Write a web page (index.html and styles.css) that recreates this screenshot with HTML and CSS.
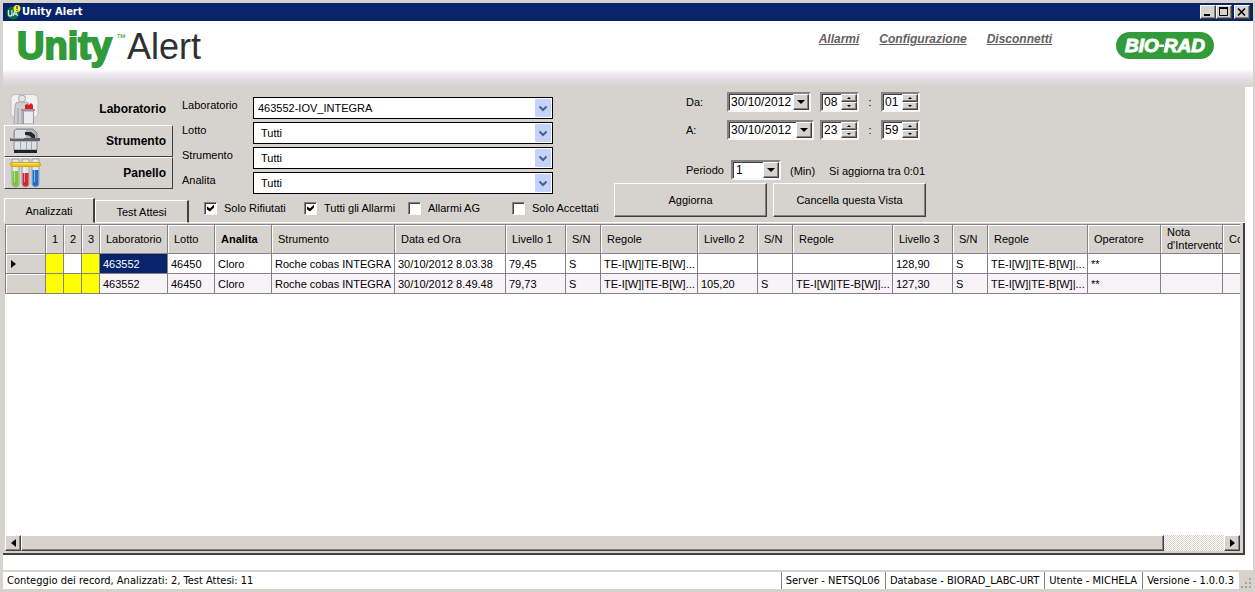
FILE: index.html
```html
<!DOCTYPE html>
<html lang="it">
<head>
<meta charset="utf-8">
<title>Unity Alert</title>
<link rel="stylesheet" href="styles.css">
</head>
<body>
<div class="window">
  <div class="titlebar">
    <svg class="app-icon" width="15" height="15" viewBox="0 0 15 15" aria-hidden="true">
      <circle cx="7" cy="8" r="6.5" fill="#0b6b43"/>
      <path d="M2.5 5v4q0 2 1.7 2t1.7-2V5M7 11l2-6 2.500 6M7.500 9h3" fill="none" stroke="#cfe8dc" stroke-width="1.300"/>
      <circle cx="11" cy="3.500" r="3.500" fill="#f4ee2e"/>
      <path d="M11 1v3M11 5v1" stroke="#333" stroke-width="1.200"/>
    </svg>
    <span class="title">Unity Alert</span>
    <div class="window-buttons">
      <button type="button" class="raised wbtn" aria-label="Riduci"><svg width="12" height="10" viewBox="0 0 12 10"><path d="M2 8h6" stroke="#000" stroke-width="2"/></svg></button>
      <button type="button" class="raised wbtn" aria-label="Ingrandisci"><svg width="12" height="10" viewBox="0 0 12 10"><path d="M1.500 1v7.500h8V1" fill="none" stroke="#000"/><path d="M1 1h9" stroke="#000" stroke-width="2"/></svg></button>
      <button type="button" class="raised wbtn wclose" aria-label="Chiudi"><svg width="12" height="10" viewBox="0 0 12 10"><path d="M2 1.500l7 7M9 1.500l-7 7" stroke="#000" stroke-width="1.600"/></svg></button>
    </div>
  </div>

  <header class="banner">
    <h1 class="brand"><span class="brand-unity">Unity</span><sup class="brand-tm">™</sup><span class="brand-alert">Alert</span></h1>
    <nav class="links">
      <a href="#allarmi">Allarmi</a>
      <a href="#configurazione">Configurazione</a>
      <a href="#disconnetti">Disconnetti</a>
    </nav>
    <div class="biorad">BIO<svg width="5" height="4" viewBox="0 0 5 4" aria-hidden="true"><path d="M0.500 0.500h5v2.500h-5.500z" fill="#fff"/></svg>RAD</div>
  </header>

  <main class="content">
    <section class="controls">
      <div class="left">
        <div class="filters">
          <div class="side-nav">
            <button type="button" class="side selected">
              <svg width="30" height="30" viewBox="0 0 30 30" aria-hidden="true">
                <rect x="1" y="0.500" width="27" height="23" rx="4" fill="#f1eff1" stroke="#c2bfc2"/>
                <path d="M4 30l1-18q0-4 4-4h6q4 0 4 3v19z" fill="#cfcfd1" stroke="#a8a8aa"/>
                <path d="M8 14v16M12 16v14" stroke="#99999b"/>
                <circle cx="12" cy="4.500" r="3.500" fill="#e4e3e5" stroke="#aaa"/>
                <path d="M13.500 17h10v13h-10z" fill="#ececee" stroke="#9b9b9d"/>
                <path d="M11 16h14" stroke="#99999b" stroke-width="2"/>
                <path d="M15 11l2-1 2 1 2-2 2 2v4h-8z" fill="#e01c1f"/>
              </svg>
              <span>Laboratorio</span>
            </button>
            <button type="button" class="side">
              <svg width="30" height="28" viewBox="0 0 30 28" aria-hidden="true">
                <path d="M4 13V4l2-2h17l4 4v7z" fill="#b4b5ba" stroke="#85878d"/>
                <path d="M5 3h11v8H5z" fill="#dcdde0"/>
                <path d="M15 5h6l4 3v4h-3q-1-4-7-4z" fill="#26282d"/>
                <path d="M4 14h23v9H4z" fill="#dfe0e3" stroke="#8b8d92"/>
                <path d="M10.500 15v8M16.500 15v8M21.500 15v8" stroke="#a2a4a9"/>
                <path d="M0 12.500h30" stroke="#5d6067" stroke-width="3"/>
                <path d="M1 11.500h13" stroke="#a7a9af"/>
                <path d="M4 24.500h23" stroke="#202226" stroke-width="3"/>
              </svg>
              <span>Strumento</span>
            </button>
            <button type="button" class="side">
              <svg width="31" height="30" viewBox="0 0 31 30" aria-hidden="true">
                <path d="M2 1h7v24q0 4-3.500 4t-3.500-4zM12 1h7v24q0 4-3.500 4t-3.500-4zM22 1h7v24q0 4-3.500 4t-3.500-4z" fill="#e3e4e8" stroke="#9ea0a8"/>
                <path d="M2.500 13h6v12q0 3.500-3 3.500t-3-3.500z" fill="#78c833"/>
                <path d="M12.500 15h6v10q0 3.500-3 3.500t-3-3.500z" fill="#cf2931"/>
                <path d="M22.500 12h6v13q0 3.500-3 3.500t-3-3.500z" fill="#1d6fce"/>
                <path d="M4.500 9v15M14.500 9v15M24.500 9v15" stroke="#fff" opacity=".5"/>
                <rect x="0.500" y="4.500" width="30" height="4" rx="2" fill="#ecc91c" stroke="#cba60f"/>
                <path d="M3 5.500h25" stroke="#fbe56a"/>
              </svg>
              <span>Panello</span>
            </button>
          </div>
          <div class="fields">
            <label for="lab">Laboratorio</label>
            <span class="combo"><select id="lab" class="tight"><option>463552-IOV_INTEGRA</option></select><svg width="16" height="18" viewBox="0 0 16 18" aria-hidden="true"><rect width="16" height="18" rx="1" fill="#c3d3fb"/><path d="M4.500 7.500L8 11l3.500-3.500" fill="none" stroke="#4d6185" stroke-width="2"/></svg></span>
            <label for="lot">Lotto</label>
            <span class="combo"><select id="lot"><option>Tutti</option></select><svg width="16" height="18" viewBox="0 0 16 18" aria-hidden="true"><rect width="16" height="18" rx="1" fill="#c3d3fb"/><path d="M4.500 7.500L8 11l3.500-3.500" fill="none" stroke="#4d6185" stroke-width="2"/></svg></span>
            <label for="str">Strumento</label>
            <span class="combo"><select id="str"><option>Tutti</option></select><svg width="16" height="18" viewBox="0 0 16 18" aria-hidden="true"><rect width="16" height="18" rx="1" fill="#c3d3fb"/><path d="M4.500 7.500L8 11l3.500-3.500" fill="none" stroke="#4d6185" stroke-width="2"/></svg></span>
            <label for="ana">Analita</label>
            <span class="combo"><select id="ana"><option>Tutti</option></select><svg width="16" height="18" viewBox="0 0 16 18" aria-hidden="true"><rect width="16" height="18" rx="1" fill="#c3d3fb"/><path d="M4.500 7.500L8 11l3.500-3.500" fill="none" stroke="#4d6185" stroke-width="2"/></svg></span>
          </div>
        </div>
        <div class="tab-row">
          <div class="tabs" role="tablist">
            <button type="button" class="tab active" role="tab" aria-selected="true">Analizzati</button>
            <button type="button" class="tab" role="tab" aria-selected="false">Test Attesi</button>
          </div>
          <div class="checks">
            <label><input type="checkbox" checked>Solo Rifiutati</label>
            <label><input type="checkbox" checked>Tutti gli Allarmi</label>
            <label><input type="checkbox">Allarmi AG</label>
            <label><input type="checkbox">Solo Accettati</label>
          </div>
        </div>
      </div>

      <div class="right">
        <div class="time-row">
          <label class="time-label" for="from">Da:</label>
          <span class="sunken date"><input id="from" type="text" value="30/10/2012"><button type="button" class="raised drop" aria-label="Apri calendario"></button></span>
          <span class="times">
            <span class="sunken spin"><input type="text" value="08" aria-label="Ora iniziale"><span class="steps"><button type="button" class="raised step up" aria-label="Aumenta"></button><button type="button" class="raised step down" aria-label="Diminuisci"></button></span></span>
            <span class="colon">:</span>
            <span class="sunken spin"><input type="text" value="01" aria-label="Minuti iniziali"><span class="steps"><button type="button" class="raised step up" aria-label="Aumenta"></button><button type="button" class="raised step down" aria-label="Diminuisci"></button></span></span>
          </span>
        </div>
        <div class="time-row">
          <label class="time-label" for="to">A:</label>
          <span class="sunken date wide"><input id="to" type="text" value="30/10/2012"><button type="button" class="raised drop" aria-label="Apri calendario"></button></span>
          <span class="times">
            <span class="sunken spin"><input type="text" value="23" aria-label="Ora finale"><span class="steps"><button type="button" class="raised step up" aria-label="Aumenta"></button><button type="button" class="raised step down" aria-label="Diminuisci"></button></span></span>
            <span class="colon">:</span>
            <span class="sunken spin"><input type="text" value="59" aria-label="Minuti finali"><span class="steps"><button type="button" class="raised step up" aria-label="Aumenta"></button><button type="button" class="raised step down" aria-label="Diminuisci"></button></span></span>
          </span>
        </div>
        <div class="period-row">
          <label class="period-label" for="period">Periodo</label>
          <span class="sunken period"><select id="period"><option>1</option></select><span class="raised drop"></span></span>
          <span class="unit">(Min)</span>
          <span class="refresh">Si aggiorna tra 0:01</span>
        </div>
        <div class="actions">
          <button type="button" class="big">Aggiorna</button>
          <button type="button" class="big">Cancella questa Vista</button>
        </div>
      </div>
    </section>

    <section class="grid-panel">
      <div class="grid-view">
        <table>
          <colgroup>
            <col class="w40"><col class="w18"><col class="w18"><col class="w18"><col class="w68"><col class="w47"><col class="w57"><col class="w123"><col class="w111"><col class="w60"><col class="w35"><col class="w97"><col class="w60"><col class="w35"><col class="w100"><col class="w60"><col class="w35"><col class="w100"><col class="w73"><col class="w62"><col class="w100">
          </colgroup>
          <thead>
            <tr><th></th><th>1</th><th>2</th><th>3</th><th>Laboratorio</th><th>Lotto</th><th class="sorted">Analita</th><th>Strumento</th><th>Data ed Ora</th><th>Livello 1</th><th>S/N</th><th>Regole</th><th>Livello 2</th><th>S/N</th><th>Regole</th><th>Livello 3</th><th>S/N</th><th>Regole</th><th>Operatore</th><th>Nota d'Intervento</th><th>Commento</th></tr>
          </thead>
          <tbody>
            <tr><th class="rowhead"><svg width="5" height="8" viewBox="0 0 5 8" aria-hidden="true"><path d="M0 0l5 4-5 4z"/></svg></th><td class="alarm"></td><td></td><td class="alarm"></td><td class="current">463552</td><td>46450</td><td>Cloro</td><td>Roche cobas INTEGRA</td><td>30/10/2012 8.03.38</td><td>79,45</td><td>S</td><td>TE-I[W]|TE-B[W]...</td><td></td><td></td><td></td><td>128,90</td><td>S</td><td>TE-I[W]|TE-B[W]|...</td><td>**</td><td></td><td></td></tr>
            <tr><th class="rowhead"></th><td class="alarm"></td><td class="alarm"></td><td class="alarm"></td><td>463552</td><td>46450</td><td>Cloro</td><td>Roche cobas INTEGRA</td><td>30/10/2012 8.49.48</td><td>79,73</td><td>S</td><td>TE-I[W]|TE-B[W]...</td><td>105,20</td><td>S</td><td>TE-I[W]|TE-B[W]|...</td><td>127,30</td><td>S</td><td>TE-I[W]|TE-B[W]|...</td><td>**</td><td></td><td></td></tr>
          </tbody>
        </table>
      </div>
      <div class="scrollbar">
        <button type="button" class="raised sbtn" aria-label="Scorri a sinistra"><svg width="5" height="8" viewBox="0 0 5 8"><path d="M5 0L0 4l5 4z"/></svg></button>
        <div class="track"><div class="raised thumb"></div></div>
        <button type="button" class="raised sbtn" aria-label="Scorri a destra"><svg width="5" height="8" viewBox="0 0 5 8"><path d="M0 0l5 4-5 4z"/></svg></button>
      </div>
    </section>
  </main>

  <footer class="status">
    <span class="count">Conteggio dei record, Analizzati: 2, Test Attesi: 11</span>
    <span class="cell">Server - NETSQL06</span>
    <span class="cell">Database - BIORAD_LABC-URT</span>
    <span class="cell">Utente - MICHELA</span>
    <span class="cell">Versione - 1.0.0.3</span>
    <svg class="grip" width="14" height="18" viewBox="0 0 14 18" aria-hidden="true"><path d="M10 6h2v2h-2zM6 10h2v2H6zM10 10h2v2h-2zM2 14h2v2H2zM6 14h2v2H6zM10 14h2v2h-2z" fill="#a5a29a"/></svg>
  </footer>
</div>
</body>
</html>
```
FILE: styles.css
```css
:root {
  --face: #d6d3ce;
  --shadow: #848284;
  --dark: #424142;
  --navy: #08246b;
}
* { box-sizing: border-box; }
body {
  margin: 0;
  background: var(--face);
  color: #000;
  font: 11px/14px "Liberation Sans", Arial, sans-serif;
}
button, input, select {
  margin: 0;
  padding: 0;
  border: 0;
  border-radius: 0;
  background: none;
  color: inherit;
  font: inherit;
  appearance: none;
}
svg { display: block; flex: none; }

.window {
  display: flex;
  flex-direction: column;
  min-height: 100vh;
  padding: 3px 2px 3px 3px;
}
.raised {
  background: var(--face);
  border: 1px solid;
  border-color: #fff var(--dark) var(--dark) #fff;
  box-shadow: inset -1px -1px var(--shadow);
}
.sunken {
  background: #fff;
  border: 2px solid;
  border-color: var(--shadow) #f7f7f7 #f7f7f7 var(--shadow);
  box-shadow: inset 1px 1px var(--dark);
}

/* Title bar */
.titlebar {
  display: flex;
  align-items: center;
  height: 18px;
  padding: 0 3px;
  background: var(--navy);
  color: #fff;
}
.title {
  flex: 1;
  padding-left: 1px;
  font: bold 11px/18px "DejaVu Sans Condensed", "Open Sans", sans-serif;
}
.window-buttons { display: flex; }
.wbtn {
  display: flex;
  align-items: center;
  justify-content: center;
  width: 16px;
  height: 14px;
}
.wclose { margin-left: 2px; }

/* Banner */
.banner {
  display: flex;
  align-items: flex-start;
  height: 66px;
  padding: 0 39px 0 14px;
  background: linear-gradient(#fff 48px, #efebef 53px, #e0dcdf 59px, var(--face) 66px);
}
.brand {
  display: flex;
  align-items: baseline;
  flex: 1;
  margin: 0;
  padding-top: 3px;
  line-height: 44px;
  font-weight: normal;
}
.brand-unity {
  color: #319a39;
  font-size: 38px;
  font-weight: bold;
  -webkit-text-stroke: 2px #319a39;
}
.brand-tm {
  align-self: flex-start;
  padding: 8px 1px 0 4px;
  color: #319a39;
  font-size: 10px;
  line-height: 12px;
}
.brand-alert { color: #313031; font-size: 36px; }
.links {
  display: flex;
  gap: 20px;
  padding: 11px 64px 0 0;
  font: italic bold 12px/14px "Liberation Sans", Arial, sans-serif;
}
.links a { color: #636163; }
.biorad {
  display: flex;
  align-items: center;
  justify-content: center;
  width: 98px;
  height: 27px;
  margin-top: 11px;
  border-radius: 14px;
  background: #319a39;
  color: #fff;
  font: italic bold 19px/27px "Liberation Sans", Arial, sans-serif;
  -webkit-text-stroke: 1px #fff;
}

/* Controls */
.content {
  display: flex;
  flex-direction: column;
  flex: 1;
  padding-right: 8px;
  background: #fff;
}
.controls {
  display: flex;
  background: var(--face);
  padding-left: 1px;
}
.left { width: 610px; }
.filters { display: flex; gap: 9px; padding-top: 6px; }
.side-nav { width: 169px; }
.side {
  display: flex;
  align-items: center;
  justify-content: space-between;
  width: 100%;
  height: 32px;
  padding: 0 6px 0 5px;
  border: 1px solid;
  border-color: #fff var(--dark) var(--dark) #fff;
  font-size: 12px;
  font-weight: bold;
}
.side.selected { border-color: transparent; }
.fields {
  display: grid;
  grid-template-columns: 71px 300px;
  grid-auto-rows: 22px;
  row-gap: 3px;
  padding-top: 4px;
}
.fields label { padding-top: 1px; }
.combo {
  display: grid;
  align-items: center;
  border: 1px solid #000;
  background: #fff;
}
.combo > * { grid-area: 1 / 1; }
.combo select { width: 100%; height: 20px; padding: 0 20px 1px 7px; }
.combo .tight { padding-left: 4px; }
.combo svg { justify-self: end; margin-right: 1px; pointer-events: none; }

.tab-row { display: flex; align-items: flex-end; padding-top: 4px; }
.tabs { display: flex; align-items: flex-end; }
.tab {
  width: 94px;
  height: 23px;
  border-top: 1px solid #fff;
  border-left: 1px solid #fff;
  border-right: 2px solid var(--dark);
  border-bottom: 1px solid #fff;
}
.tab.active { width: 91px; height: 25px; border-bottom-color: var(--face); }
.checks {
  display: grid;
  grid-template-columns: 100px 104px 104px auto;
  flex: 1;
  height: 24px;
  padding-left: 15px;
  border-bottom: 1px solid #fff;
}
.checks label { display: flex; align-items: center; gap: 7px; height: 18px; white-space: nowrap; }
.checks input {
  display: grid;
  place-content: center;
  width: 13px;
  height: 13px;
  border: 1px solid;
  border-color: var(--shadow) #fff #fff var(--shadow);
  background: #fff;
  box-shadow: inset 1px 1px var(--dark);
}
.checks input:checked::before {
  content: "";
  width: 7px;
  height: 7px;
  background: #000;
  clip-path: polygon(0 29%, 43% 58%, 100% 0, 100% 43%, 43% 100%, 0 71%);
}

.right { flex: 1; padding-top: 5px; border-bottom: 1px solid #fff; }
.time-row { display: flex; height: 20px; margin-bottom: 8px; padding-left: 72px; }
.time-label { width: 41px; padding-top: 3px; }
.date { display: flex; width: 84px; }
.date.wide { width: 87px; }
.date input { flex: 1; min-width: 0; padding-left: 2px; font-size: 12px; }
.times { display: flex; padding-left: 9px; }
.wide + .times { padding-left: 6px; }
.drop { display: flex; align-items: center; justify-content: center; width: 16px; }
.drop::before {
  content: "";
  border: 4px solid transparent;
  border-top-color: #000;
  border-bottom: 0;
}
.spin { display: flex; width: 39px; }
.spin input { flex: 1; min-width: 0; padding-left: 2px; font-size: 12px; }
.steps { display: flex; flex-direction: column; width: 16px; }
.step { display: flex; align-items: center; justify-content: center; flex: 1; }
.step::before { content: ""; border: 2px solid transparent; }
.up::before { border-bottom-color: #000; border-top: 0; }
.down::before { border-top-color: #000; border-bottom: 0; }
.colon { width: 22px; padding-top: 3px; text-align: center; }
.period-row { display: flex; align-items: center; height: 20px; margin-top: 20px; padding-left: 72px; }
.period-label { width: 45px; }
.period { display: grid; grid-template-columns: 1fr 16px; width: 50px; height: 20px; }
.period select { grid-area: 1 / 1 / 2 / 3; padding-left: 3px; font-size: 12px; }
.period .drop { grid-area: 1 / 2; pointer-events: none; }
.unit { padding: 2px 14px 0 9px; }
.refresh { padding-top: 2px; }
.actions { display: flex; gap: 6px; padding-top: 3px; }
.big {
  width: 153px;
  height: 34px;
  border: 1px solid;
  border-color: #fff var(--dark) var(--dark) #fff;
  box-shadow: inset -1px -1px var(--shadow);
}

/* Data grid */
.grid-panel {
  display: flex;
  flex-direction: column;
  flex: 1;
  margin-bottom: 15px;
  padding: 1px 3px 2px 2px;
  border-right: 2px solid var(--dark);
  border-bottom: 2px solid var(--dark);
  background: var(--face);
}
.grid-view {
  flex: 1;
  overflow: hidden;
  width: 0;
  min-width: 100%;
  background: #fff;
}
table {
  width: 1318px;
  table-layout: fixed;
  border-collapse: collapse;
}
.w18 { width: 18px; } .w35 { width: 35px; } .w40 { width: 40px; }
.w47 { width: 47px; } .w57 { width: 57px; } .w60 { width: 60px; }
.w62 { width: 62px; } .w68 { width: 68px; } .w73 { width: 73px; }
.w97 { width: 97px; } .w100 { width: 100px; } .w111 { width: 111px; }
.w123 { width: 123px; }
th, td {
  overflow: hidden;
  padding: 0 3px;
  border: 1px solid var(--shadow);
  font-weight: normal;
  text-align: left;
  white-space: nowrap;
}
thead th {
  height: 29px;
  padding: 0 0 0 6px;
  background: var(--face);
  box-shadow: inset 1px 1px #fff;
  line-height: 13px;
  white-space: normal;
}
thead .sorted { font-weight: bold; }
tbody tr { height: 20px; }
tbody tr:nth-child(even) { background: #f7f3f7; }
.rowhead { padding-left: 5px; background: var(--face); box-shadow: inset 1px 1px #fff; }
.alarm { background: #ff0; }
.current { background: var(--navy); color: #fff; }

.scrollbar { display: flex; height: 16px; }
.sbtn { display: flex; align-items: center; justify-content: center; width: 16px; }
.track {
  flex: 1;
  background: repeating-conic-gradient(#fff 0 25%, var(--face) 0 50%) 0 0 / 2px 2px;
}
.thumb { width: 95%; height: 100%; }

/* Status bar */
.status {
  display: flex;
  height: 19px;
  border-top: 2px solid var(--face);
  background: #fff;
  font: 11px/18px "DejaVu Sans Condensed", "Noto Sans", sans-serif;
}
.count { flex: 1; padding-left: 4px; }
.cell { padding: 0 5px 0 4px; border-left: 1px solid var(--shadow); }
.grip { background: var(--face); }
```
